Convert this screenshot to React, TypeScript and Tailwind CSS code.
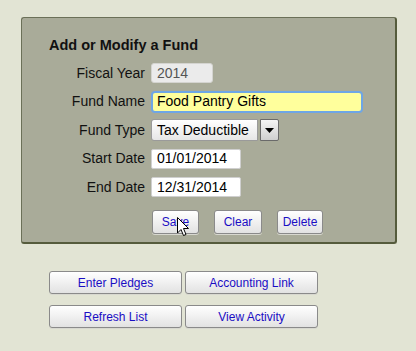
const font = { fontFamily: '"Liberation Sans", Arial, sans-serif' };

function Btn({ label, w, h }: { label: string; w: string; h: string }) {
  return (
    <button
      className={`${w} ${h} rounded-[3px] border border-[#8a8a8a] bg-gradient-to-b from-[#ffffff] to-[#e2e2e2] text-[12px] text-[#1a0dc4] leading-none shadow-[0_1px_0_#d8d8d0]`}
    >
      {label}
    </button>
  );
}

function Row({ label, children }: { label: string; children: React.ReactNode }) {
  return (
    <div className="flex h-[28.5px] items-center">
      <div className="w-[96px] text-right text-[14px] text-[#111]">{label}</div>
      <div className="ml-[6px] flex items-center">{children}</div>
    </div>
  );
}

function Cursor() {
  return (
    <svg
      className="absolute left-[177px] top-[217px]"
      width="13"
      height="20"
      viewBox="0 0 13 20"
    >
      <path
        d="M0.5 0.5 L0.5 16 L4 12.5 L6.5 18.5 L9 17.5 L6.5 11.5 L11.5 11.5 Z"
        fill="#fff"
        stroke="#000"
        strokeWidth="1"
        strokeLinejoin="miter"
      />
    </svg>
  );
}

export default function App() {
  return (
    <div className="relative h-[351px] w-[416px] bg-[#e2e4d4] pt-[17px]" style={font}>
      <div className="ml-[21px] w-[376px] h-[227px] rounded-[3px] border-t border-l border-r-2 border-b-2 border-t-[#6b7058] border-l-[#6b7058] border-r-[#555b3c] border-b-[#555b3c] bg-[#a9ab99] pl-[27px] pt-[19px]">
        <div className="text-[14.5px] font-bold leading-[16px] text-[#111]">Add or Modify a Fund</div>
        <div className="mt-[6px]">
          <Row label="Fiscal Year">
            <div className="flex h-[20px] w-[62px] items-center rounded-[3px] border border-[#d4d4d0] bg-[#ebebeb] pl-[5px] text-[14px] text-[#555]">
              2014
            </div>
          </Row>
          <Row label="Fund Name">
            <div className="flex h-[22px] w-[212px] items-center rounded-[4px] border-2 border-[#6ea6e6] bg-[#ffff9c] pl-[4px] text-[14px] text-[#000]">
              Food Pantry Gifts
            </div>
          </Row>
          <Row label="Fund Type">
            <div className="flex h-[22px] w-[128px] items-center">
              <div className="flex h-full flex-1 items-center rounded-l-[3px] border border-[#9a9a9a] bg-gradient-to-b from-[#ffffff] to-[#e6e6e6] pl-[5px] text-[14px] text-[#000]">
                Tax Deductible
              </div>
              <div className="ml-[2px] flex h-[22px] w-[19px] items-center justify-center rounded-r-[2px] border border-[#6a6a6a] bg-gradient-to-b from-[#f4f4f4] to-[#cfcfcf]">
                <svg width="9" height="5" viewBox="0 0 9 5">
                  <path d="M0 0 H9 L4.5 5 Z" fill="#000" />
                </svg>
              </div>
            </div>
          </Row>
          <Row label="Start Date">
            <div className="flex h-[20px] w-[90px] items-center rounded-[2px] border border-[#cfcfcf] bg-white pl-[5px] text-[14px] text-[#000]">
              01/01/2014
            </div>
          </Row>
          <Row label="End Date">
            <div className="flex h-[20px] w-[90px] items-center rounded-[2px] border border-[#cfcfcf] bg-white pl-[5px] text-[14px] text-[#000]">
              12/31/2014
            </div>
          </Row>
        </div>
        <div className="mt-[8px] ml-[103px] flex gap-[15px]">
          <Btn label="Save" w="w-[47px]" h="h-[24px]" />
          <Btn label="Clear" w="w-[48px]" h="h-[24px]" />
          <Btn label="Delete" w="w-[46px]" h="h-[24px]" />
        </div>
      </div>
      <div className="ml-[49px] mt-[27px] grid w-[269px] grid-cols-2 gap-x-[3px] gap-y-[11px]">
        <Btn label="Enter Pledges" w="w-[133px]" h="h-[23px]" />
        <Btn label="Accounting Link" w="w-[133px]" h="h-[23px]" />
        <Btn label="Refresh List" w="w-[133px]" h="h-[23px]" />
        <Btn label="View Activity" w="w-[133px]" h="h-[23px]" />
      </div>
      <Cursor />
    </div>
  );
}
